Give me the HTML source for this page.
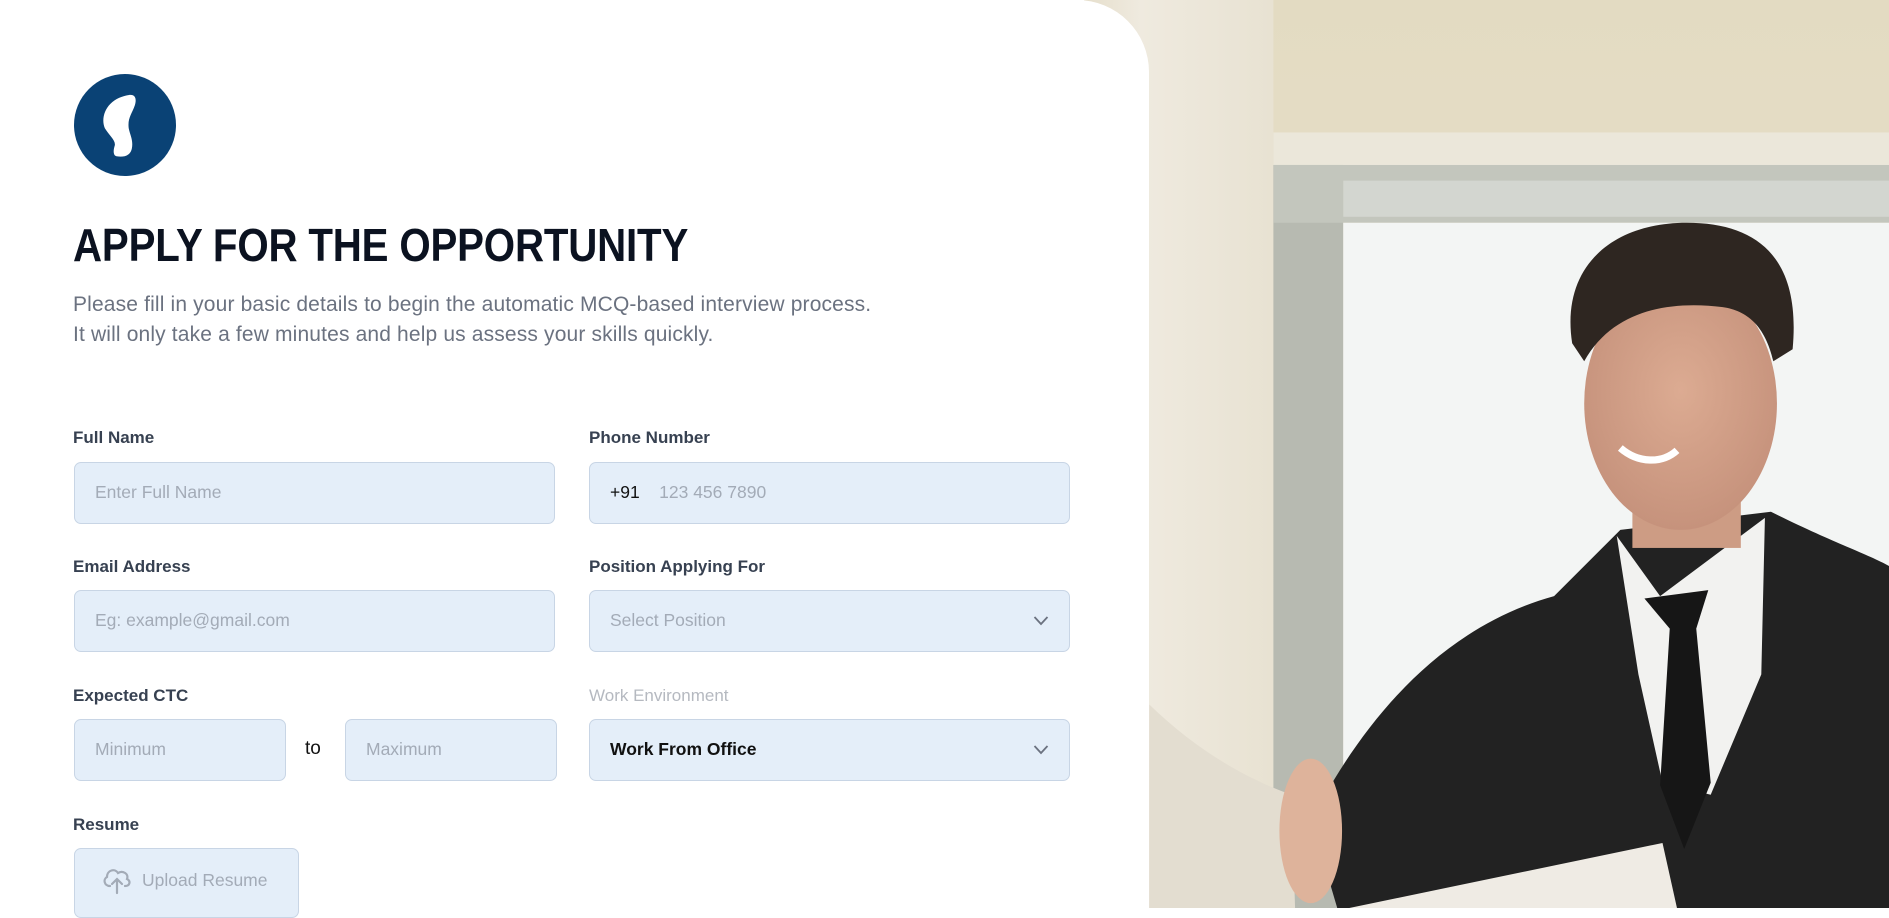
<!DOCTYPE html>
<html><head><meta charset="utf-8"><style>
*{box-sizing:border-box;margin:0;padding:0}
body{width:1889px;height:908px;overflow:hidden;position:relative;background:#fff;font-family:"Liberation Sans",sans-serif}
.bg{position:absolute;left:0;top:0}
.panel{position:absolute;left:0;top:0;width:1149px;height:908px;background:#fff;border-top-right-radius:72px}
.logo{position:absolute;left:74px;top:74px}
h1{position:absolute;left:73px;top:218px;font-size:46px;font-weight:700;color:#0b1220;white-space:nowrap;transform:scaleX(.875);transform-origin:left top;letter-spacing:-.2px}
.sub{position:absolute;left:73px;top:290px;font-size:21px;line-height:30px;color:#6b7280;white-space:nowrap;letter-spacing:.15px}
.lbl{position:absolute;font-size:17px;font-weight:700;color:#374151}
.lbl.dim{color:#b5b9c0;font-weight:400}
.in{position:absolute;height:62px;background:#e4eef9;border:1.5px solid #c8d5e5;border-radius:7px;font-size:17.5px;color:#a3abb7;padding-left:20px;line-height:59px;white-space:nowrap}
.in b{color:#111;font-weight:400}
.chev{position:absolute;right:20px;top:24px}
</style></head><body>
<svg class="bg" width="1889" height="908" viewBox="0 0 1568 754" preserveAspectRatio="none">
<defs>
<linearGradient id="w" x1="0" y1="0" x2="0" y2="1"><stop offset="0" stop-color="#e3dbc2"/><stop offset="1" stop-color="#ebe5d3"/></linearGradient>
<linearGradient id="p" x1="0" y1="0" x2="1" y2="0"><stop offset="0" stop-color="#e6dfcc"/><stop offset=".3" stop-color="#efeadf"/><stop offset="1" stop-color="#e8e2d2"/></linearGradient>
<radialGradient id="f" cx=".5" cy=".45" r=".6"><stop offset="0" stop-color="#dcab92"/><stop offset="1" stop-color="#c4907a"/></radialGradient>
</defs>
<rect x="900" y="0" width="668" height="754" fill="url(#w)"/>
<rect x="1057" y="110" width="511" height="30" fill="#ebe7da"/>
<rect x="900" y="0" width="157" height="754" fill="url(#p)"/>
<rect x="1057" y="137" width="58" height="617" fill="#b7bab1"/>
<rect x="1057" y="137" width="511" height="48" fill="#c3c6bd"/>
<rect x="1115" y="150" width="453" height="30" fill="#d3d6d0"/>
<rect x="1115" y="185" width="453" height="569" fill="#f3f5f4"/>
<path d="M954 585 C990 620 1030 645 1072 660 L1075 754 L954 754Z" fill="#e3ddd0"/>
<path d="M1100 660 C1140 590 1200 520 1290 495 L1345 440 L1470 425 C1520 450 1550 460 1568 470 L1568 754 L1110 754 C1100 720 1090 690 1100 660Z" fill="#222222"/>
<path d="M1342 445 L1378 495 L1465 430 L1462 560 L1420 660 L1380 650 L1360 560Z" fill="#f2f2f0"/>
<path d="M1365 497 L1418 490 L1408 522 L1420 650 L1398 705 L1378 652 L1386 522Z" fill="#161616"/>
<rect x="1355" y="380" width="90" height="75" fill="#cd9c84"/>
<ellipse cx="1395" cy="335" rx="80" ry="105" fill="url(#f)"/>
<path d="M1305 285 C1295 220 1340 185 1400 185 C1460 185 1495 215 1488 290 L1472 300 C1465 270 1450 258 1430 255 C1390 250 1340 255 1315 300Z" fill="#2e2621"/>
<path d="M1345 372 C1360 385 1380 385 1392 374" stroke="#fff" stroke-width="6" fill="none"/>
<ellipse cx="1088" cy="690" rx="26" ry="60" fill="#deb39b"/>
<path d="M1120 754 L1380 700 L1392 754Z" fill="#efebe4"/>
</svg>
<div class="panel"></div>
<svg class="logo" width="102" height="102" viewBox="0 0 300 300">
<circle cx="150" cy="150" r="150" fill="#0a4275"/>
<path d="M175 42 C195 38 200 52 194 72 C185 98 172 110 176 140 C180 160 190 175 185 200 C180 222 160 225 140 222 C130 220 130 205 135 190 C138 175 118 160 106 140 C96 118 102 88 122 68 C138 52 158 45 175 42Z" fill="#fff" transform="translate(-15 20)"/>
</svg>
<h1>APPLY FOR THE OPPORTUNITY</h1>
<div class="sub">Please fill in your basic details to begin the automatic MCQ-based interview process.<br>It will only take a few minutes and help us assess your skills quickly.</div>

<div class="lbl" style="left:73px;top:428px">Full Name</div>
<div class="lbl" style="left:589px;top:428px">Phone Number</div>
<div class="in" style="left:74px;top:462px;width:481px">Enter Full Name</div>
<div class="in" style="left:589px;top:462px;width:481px"><b>+91</b>&nbsp;&nbsp;&nbsp;&nbsp;123 456 7890</div>

<div class="lbl" style="left:73px;top:557px">Email Address</div>
<div class="lbl" style="left:589px;top:557px">Position Applying For</div>
<div class="in" style="left:74px;top:590px;width:481px">Eg: example@gmail.com</div>
<div class="in" style="left:589px;top:590px;width:481px">Select Position<svg class="chev" width="16" height="11" viewBox="0 0 16 11"><path d="M1.5 2 L8 9 L14.5 2" stroke="#6b7280" stroke-width="1.8" fill="none"/></svg></div>

<div class="lbl" style="left:73px;top:686px">Expected CTC</div>
<div class="lbl dim" style="left:589px;top:686px">Work Environment</div>
<div class="in" style="left:74px;top:719px;width:212px">Minimum</div>
<div style="position:absolute;left:305px;top:738px;font-size:19px;color:#111">to</div>
<div class="in" style="left:345px;top:719px;width:212px">Maximum</div>
<div class="in" style="left:589px;top:719px;width:481px;color:#111;font-weight:700">Work From Office<svg class="chev" width="16" height="11" viewBox="0 0 16 11"><path d="M1.5 2 L8 9 L14.5 2" stroke="#6b7280" stroke-width="1.8" fill="none"/></svg></div>

<div class="lbl" style="left:73px;top:815px">Resume</div>
<div class="in" style="left:74px;top:848px;width:225px;height:70px;padding-left:67px;line-height:62px">Upload Resume
<svg style="position:absolute;left:26px;top:16px" width="32" height="30" viewBox="0 0 32 30"><path d="M9 21 C3 21 2 14 6 12 C6 5 14 3 17 8 C22 5 28 9 26 14 C30 16 29 21 24 21" stroke="#a3abb7" stroke-width="2.2" fill="none" stroke-linecap="round"/><path d="M16 28 V15 M11 19 L16 14 L21 19" stroke="#a3abb7" stroke-width="2.2" fill="none" stroke-linecap="round"/></svg></div>
</body></html>
